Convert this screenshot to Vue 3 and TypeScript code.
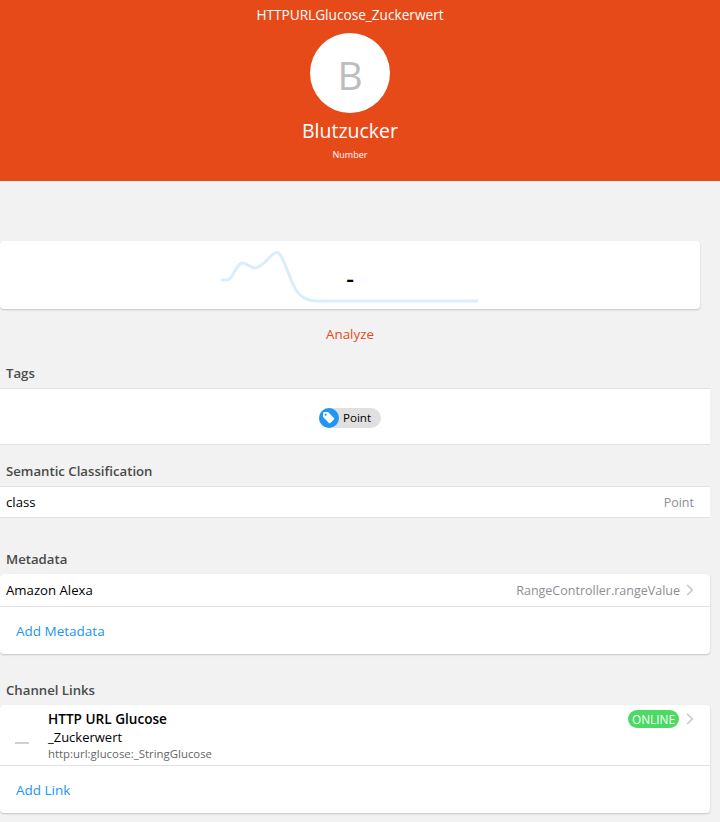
<template>
  <div class="page">
    <header class="hero">
      <div class="hero-title">HTTPURLGlucose_Zuckerwert</div>
      <div class="avatar">B</div>
      <div class="hero-name">Blutzucker</div>
      <div class="hero-type">Number</div>
    </header>

    <section class="state-card">
      <svg class="trend" width="260" height="70" viewBox="0 0 260 70">
        <path
          d="M1 39 C6 39 9 40 12 35 C15 30 18 22 23 22 C27 22 30 27 35 27 C41 27 48 18 52 14 C55 11 58 10 61 15 C66 24 71 41 76 49 C81 57 88 60 97 60 C115 60 240 60 258 60"
          fill="none"
          stroke="#d9eefd"
          stroke-width="3"
        />
      </svg>
      <span class="state-value">-</span>
    </section>

    <div class="analyze">Analyze</div>

    <h3 class="label tags-label">Tags</h3>
    <div class="block tags">
      <span class="chip">
        <span class="chip-icon">
          <svg width="13" height="13" viewBox="0 0 12 12">
            <path d="M1 2.4 C1 1.6 1.6 1 2.4 1 H5.6 L11 6.4 C11.4 6.8 11.4 7.4 11 7.8 L7.8 11 C7.4 11.4 6.8 11.4 6.4 11 L1 5.6 Z" fill="#fff" />
            <circle cx="3.4" cy="3.4" r="1" fill="#2196f3" />
          </svg>
        </span>
        <span class="chip-text">Point</span>
      </span>
    </div>

    <h3 class="label semantic-label">Semantic Classification</h3>
    <div class="block row-plain">
      <span class="row-title">class</span>
      <span class="row-after">Point</span>
    </div>

    <h3 class="label metadata-label">Metadata</h3>
    <div class="card">
      <div class="row">
        <span class="row-title">Amazon Alexa</span>
        <span class="row-after">RangeController.rangeValue</span>
        <svg class="chevron" width="8" height="12" viewBox="0 0 8 12">
          <path d="M1.2 1 L6.2 6 L1.2 11" fill="none" stroke="#c7c7cc" stroke-width="1.6" />
        </svg>
      </div>
      <a class="add-link">Add Metadata</a>
    </div>

    <h3 class="label links-label">Channel Links</h3>
    <div class="card">
      <div class="link-row">
        <span class="link-state"></span>
        <div class="link-body">
          <div class="link-name">HTTP URL Glucose</div>
          <div class="link-sub">_Zuckerwert</div>
          <div class="link-uid">http:url:glucose:_StringGlucose</div>
        </div>
        <span class="badge">ONLINE</span>
        <svg class="chevron" width="8" height="12" viewBox="0 0 8 12">
          <path d="M1.2 1 L6.2 6 L1.2 11" fill="none" stroke="#c7c7cc" stroke-width="1.6" />
        </svg>
      </div>
      <a class="add-link">Add Link</a>
    </div>
  </div>
</template>

<script setup lang="ts">
</script>

<style>
html,
body {
  margin: 0;
  background: #f2f2f2;
}
</style>

<style scoped>
.page {
  width: 720px;
  height: 822px;
  overflow: hidden;
  background: #f2f2f2;
  font-family: "Open Sans", "Noto Sans", sans-serif;
  font-size: 13.2px;
  color: #000;
}

.hero {
  width: 700px;
  height: 181px;
  background: #e64a19;
  box-shadow: 20px 0 0 #e64a19;
  color: #fff;
  display: flex;
  flex-direction: column;
  align-items: center;
  box-sizing: border-box;
  padding-top: 6px;
}

.hero-title {
  font-size: 13.65px;
  line-height: 18px;
  height: 27px;
}

.avatar {
  width: 80px;
  height: 80px;
  border-radius: 50%;
  background: #fff;
  color: #bdbdbd;
  font-size: 39px;
  line-height: 84px;
  text-align: center;
}

.hero-name {
  font-size: 19.5px;
  line-height: 26px;
  margin-top: 5px;
}

.hero-type {
  font-size: 9px;
  line-height: 12px;
  margin-top: 5px;
}

.state-card {
  width: 700px;
  height: 68px;
  margin-top: 60px;
  background: #fff;
  border-radius: 4px;
  box-shadow: 0 1px 2px rgba(0, 0, 0, 0.2);
  position: relative;
}

.trend {
  position: absolute;
  left: 220px;
  top: 0;
}

.state-value {
  position: absolute;
  left: 0;
  right: 0;
  top: 24px;
  text-align: center;
  font-size: 24px;
  font-weight: 600;
  line-height: 26px;
}

.analyze {
  margin-top: 15px;
  width: 700px;
  height: 20px;
  line-height: 20px;
  text-align: center;
  color: #e64a19;
  font-size: 13.4px;
}

.label {
  margin: 0;
  padding-left: 6px;
  font-size: 13.2px;
  font-weight: 600;
  line-height: 18px;
  color: #4a4a4a;
}

.tags-label {
  margin-top: 20px;
  margin-bottom: 6px;
}

.semantic-label {
  margin-top: 17px;
  margin-bottom: 6px;
}

.metadata-label {
  margin-top: 32px;
  margin-bottom: 6px;
}

.links-label {
  margin-top: 27px;
  margin-bottom: 6px;
}

.block {
  width: 710px;
  background: #fff;
  border-top: 1px solid #e2e2e2;
  border-bottom: 1px solid #e2e2e2;
  box-sizing: border-box;
}

.tags {
  height: 57px;
  padding: 2px 10px 0 0;
  display: flex;
  align-items: center;
  justify-content: center;
}

.chip {
  display: inline-flex;
  align-items: center;
  height: 20px;
  border-radius: 10px;
  background: #e0e0e0;
  padding-right: 10px;
}

.chip-icon {
  width: 20px;
  height: 20px;
  border-radius: 50%;
  background: #2196f3;
  display: flex;
  align-items: center;
  justify-content: center;
}

.chip-text {
  margin-left: 4px;
  font-size: 11.6px;
}

.row-plain {
  height: 32px;
  display: flex;
  align-items: center;
  justify-content: space-between;
  padding: 0 16px 0 6px;
}

.row-after {
  color: #8e8e93;
  font-size: 12.5px;
}

.card {
  width: 710px;
  background: #fff;
  border-radius: 4px;
  box-shadow: 0 1px 2px rgba(0, 0, 0, 0.2);
}

.row {
  height: 33px;
  display: flex;
  align-items: center;
  padding: 0 16px 0 6px;
  border-bottom: 1px solid #e2e2e2;
  box-sizing: border-box;
}

.row .row-after {
  margin-left: auto;
}

.chevron {
  margin-left: 6px;
  flex: none;
}

.add-link {
  display: block;
  height: 47px;
  line-height: 49px;
  padding-left: 16px;
  color: #2196f3;
  font-size: 13.5px;
}

.link-row {
  height: 61px;
  display: flex;
  align-items: flex-start;
  padding: 5px 16px 0 0;
  border-bottom: 1px solid #e2e2e2;
  box-sizing: border-box;
  position: relative;
}

.link-state {
  position: absolute;
  left: 15px;
  top: 37px;
  width: 14px;
  height: 2px;
  background: #d0d0d0;
}

.link-body {
  margin-left: 48px;
  flex: 1;
}

.link-name {
  font-size: 13.6px;
  font-weight: 600;
  line-height: 18px;
}

.link-sub {
  line-height: 18px;
  font-size: 13px;
}

.link-uid {
  color: #666;
  font-size: 11.4px;
  line-height: 15px;
}

.badge {
  background: #4cd964;
  color: #fff;
  font-size: 11.8px;
  line-height: 18px;
  height: 18px;
  border-radius: 9px;
  padding: 0 4px;
}

.link-row .chevron {
  margin-top: 3px;
  margin-left: 7px;
}
</style>
